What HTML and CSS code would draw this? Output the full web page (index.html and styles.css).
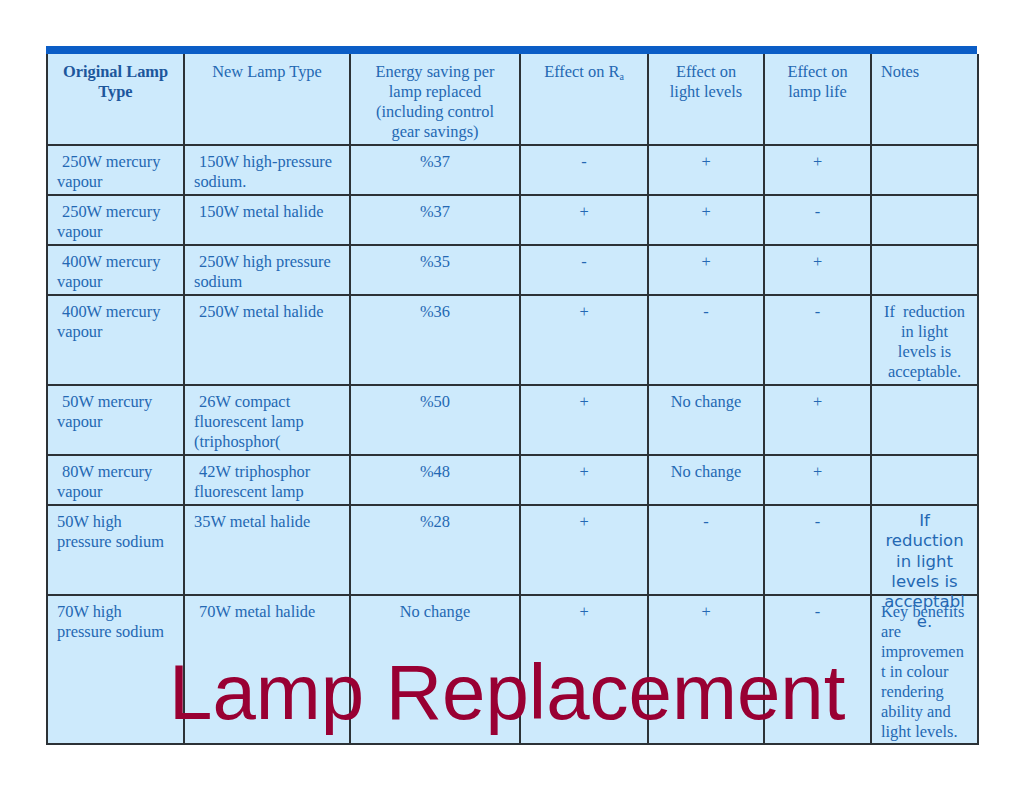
FILE: index.html
```html
<!DOCTYPE html>
<html>
<head>
<meta charset="utf-8">
<link rel="stylesheet" href="styles.css">
</head>
<body>
<div class="slide">
  <div class="frame">
    <table class="lamps">
      <colgroup>
        <col class="c1"><col class="c2"><col class="c3"><col class="c4"><col class="c5"><col class="c6"><col class="c7">
      </colgroup>
      <tr class="head">
        <td class="ctr bold">Original Lamp<br>Type</td>
        <td class="ctr">New Lamp Type</td>
        <td class="ctr">Energy saving per<br>lamp replaced<br>(including control<br>gear savings)</td>
        <td class="ctr">Effect on R<sub>a</sub></td>
        <td class="ctr">Effect on<br>light levels</td>
        <td class="ctr">Effect on<br>lamp life</td>
        <td>Notes</td>
      </tr>
      <tr class="h50">
        <td class="ind">250W mercury<br>vapour</td>
        <td class="ind">150W high-pressure<br>sodium.</td>
        <td class="ctr">%37</td>
        <td class="ctr">-</td>
        <td class="ctr">+</td>
        <td class="ctr">+</td>
        <td></td>
      </tr>
      <tr class="h50">
        <td class="ind">250W mercury<br>vapour</td>
        <td class="ind">150W metal halide</td>
        <td class="ctr">%37</td>
        <td class="ctr">+</td>
        <td class="ctr">+</td>
        <td class="ctr">-</td>
        <td></td>
      </tr>
      <tr class="h50">
        <td class="ind">400W mercury<br>vapour</td>
        <td class="ind">250W high pressure<br>sodium</td>
        <td class="ctr">%35</td>
        <td class="ctr">-</td>
        <td class="ctr">+</td>
        <td class="ctr">+</td>
        <td></td>
      </tr>
      <tr class="h90">
        <td class="ind">400W mercury<br>vapour</td>
        <td class="ind">250W metal halide</td>
        <td class="ctr">%36</td>
        <td class="ctr">+</td>
        <td class="ctr">-</td>
        <td class="ctr">-</td>
        <td class="ctr">If&nbsp; reduction<br>in light<br>levels is<br>acceptable.</td>
      </tr>
      <tr class="h70">
        <td class="ind">50W mercury<br>vapour</td>
        <td class="ind">26W compact<br>fluorescent lamp<br>(triphosphor(</td>
        <td class="ctr">%50</td>
        <td class="ctr">+</td>
        <td class="ctr">No change</td>
        <td class="ctr">+</td>
        <td></td>
      </tr>
      <tr class="h50">
        <td class="ind">80W mercury<br>vapour</td>
        <td class="ind">42W triphosphor<br>fluorescent lamp</td>
        <td class="ctr">%48</td>
        <td class="ctr">+</td>
        <td class="ctr">No change</td>
        <td class="ctr">+</td>
        <td></td>
      </tr>
      <tr class="h90">
        <td>50W high<br>pressure sodium</td>
        <td>35W metal halide</td>
        <td class="ctr">%28</td>
        <td class="ctr">+</td>
        <td class="ctr">-</td>
        <td class="ctr">-</td>
        <td class="sans"><div class="spill">If<br>reduction<br>in light<br>levels is<br>acceptabl<br>e.</div></td>
      </tr>
      <tr class="last">
        <td>70W high<br>pressure sodium</td>
        <td class="ind">70W metal halide</td>
        <td class="ctr">No change</td>
        <td class="ctr">+</td>
        <td class="ctr">+</td>
        <td class="ctr">-</td>
        <td>Key benefits<br>are<br>improvemen<br>t in colour<br>rendering<br>ability and<br>light levels.</td>
      </tr>
    </table>
    <div class="title">Lamp Replacement</div>
  </div>
</div>
</body>
</html>
```

FILE: styles.css
```css
html, body {
  margin: 0;
  padding: 0;
  background: #ffffff;
}

.slide {
  width: 1024px;
  height: 792px;
  padding: 46px 0 0 46px;
  box-sizing: border-box;
}

.frame {
  position: relative;
  width: 931px;
  border-top: 8px solid #0b5dc6;
}

.lamps {
  width: 931px;
  table-layout: fixed;
  border-collapse: collapse;
  font-family: "Liberation Serif", "Times New Roman", serif;
  font-size: 16.4px;
  line-height: 20px;
  color: #2468b3;
  background: #cdeafc;
}

.c1 { width: 137px; }
.c2 { width: 166px; }
.c3 { width: 170px; }
.c4 { width: 128px; }
.c5 { width: 116px; }
.c6 { width: 107px; }
.c7 { width: 107px; }

.lamps td {
  border: 2px solid #2c3236;
  vertical-align: top;
  padding: 6px 6px 0 9px;
  overflow: visible;
}

.lamps tr:first-child td {
  border-top: 0;
  padding-top: 8px;
}

.head { height: 91px; }
.h50 { height: 50px; }
.h70 { height: 70px; }
.h90 { height: 90px; }
.last { height: 149px; }

.lamps td.ctr {
  text-align: center;
  padding-left: 3px;
  padding-right: 3px;
}

.bold {
  font-weight: bold;
  color: #1d579c;
}

.ind {
  text-indent: 5px;
}

.lamps sub {
  font-size: 10px;
  line-height: 0;
  vertical-align: -3px;
}

.lamps td.sans {
  padding: 5px 2px 0 2px;
}

.spill {
  height: 80px;
  overflow: visible;
  text-align: center;
  font-family: "DejaVu Sans", Verdana, sans-serif;
  font-size: 16.5px;
  line-height: 20.3px;
  white-space: nowrap;
}

.title {
  position: absolute;
  left: 123px;
  top: 593px;
  font-family: "Liberation Sans", Arial, sans-serif;
  font-size: 78px;
  line-height: 90px;
  color: #990033;
  white-space: nowrap;
}
```
